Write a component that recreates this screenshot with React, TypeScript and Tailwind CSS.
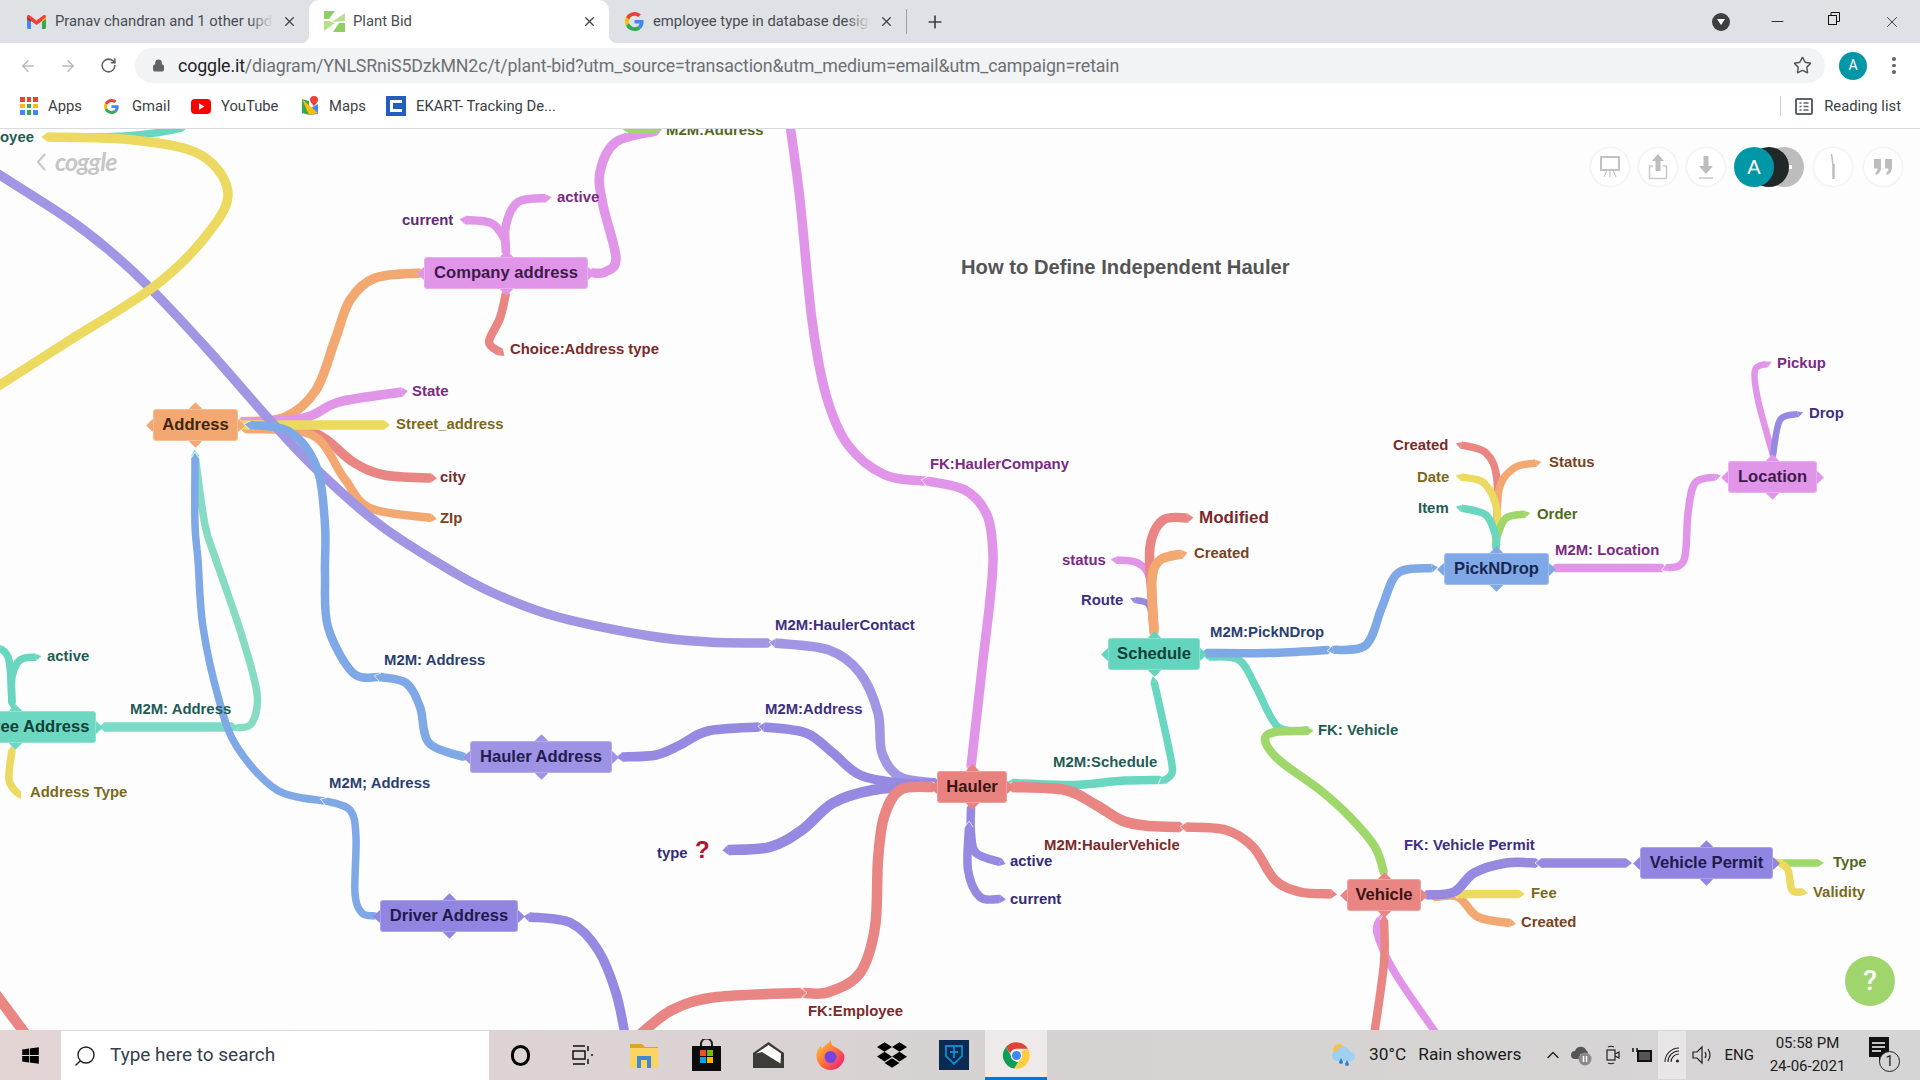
import { ArrowLeft, ArrowRight, RotateCw, Lock, Star, Plus, X, Minus, Search, ChevronUp } from "lucide-react";
import { FaDropbox, FaWindows } from "react-icons/fa";

type Pt = [number, number];
type Branch = { c: string; w: number; p: Pt[] };

const PINK = "#e095e8";
const LILAC = "#a196e3";
const PURPLE = "#9589e2";
const BLUE = "#7fa8e6";
const TEAL = "#69d6c0";
const MINT = "#85dcc2";
const ORANGE = "#f3a871";
const YELLOW = "#ecd95f";
const RED = "#e98683";
const GREEN = "#9fd76b";

// page coordinates, the svg viewBox starts at the canvas top
const branches: Branch[] = [
  { c: TEAL, w: 6, p: [[90, 137], [125, 136], [155, 133], [182, 128]] },
  { c: ORANGE, w: 8, p: [[241, 422], [285, 417], [316, 390], [335, 340], [350, 300], [375, 278], [420, 273]] },
  { c: PINK, w: 8, p: [[241, 423], [304, 418], [339, 402], [402, 392]] },
  { c: RED, w: 8, p: [[245, 428], [312, 432], [353, 462], [384, 475], [431, 478]] },
  { c: ORANGE, w: 7, p: [[245, 429], [312, 435], [344, 478], [370, 508], [431, 518]] },
  { c: YELLOW, w: 8, p: [[241, 425], [384, 425]] },
  { c: LILAC, w: 8, p: [[-5, 172], [67, 218], [110, 251], [152, 290], [210, 352], [268, 418], [312, 465], [380, 525], [455, 573], [500, 596], [558, 617], [650, 636], [708, 642], [768, 643]] },
  { c: YELLOW, w: 8, p: [[47, 137], [134, 140], [201, 155], [228, 195], [201, 242], [152, 288], [67, 342], [-5, 388]] },
  { c: BLUE, w: 7, p: [[250, 425], [290, 432], [317, 468], [325, 525], [325, 575], [328, 627], [353, 673], [380, 677]] },
  { c: BLUE, w: 7, p: [[380, 677], [406, 683], [420, 707], [429, 743], [464, 757]] },
  { c: MINT, w: 6, p: [[195, 455], [205, 525], [216, 560], [241, 633], [257, 693], [252, 723], [237, 728]] },
  { c: "#79dcc6", w: 8, p: [[104, 727], [232, 727]] },
  { c: BLUE, w: 6, p: [[195, 458], [195, 525], [198, 560], [203, 627], [219, 700], [237, 747], [277, 790], [324, 801]] },
  { c: BLUE, w: 6, p: [[326, 801], [350, 810], [356, 837], [355, 893], [362, 913], [375, 916]] },
  { c: TEAL, w: 6, p: [[0, 648], [9, 660], [12, 703]] },
  { c: TEAL, w: 6, p: [[36, 657], [20, 660], [12, 677], [12, 703]] },
  { c: YELLOW, w: 6, p: [[12, 750], [9, 780], [18, 794]] },
  { c: PINK, w: 7, p: [[546, 198], [518, 202], [506, 225], [506, 252]] },
  { c: PINK, w: 7, p: [[465, 220], [491, 223], [504, 238], [506, 252]] },
  { c: PINK, w: 8, p: [[592, 273], [605, 272], [616, 258], [603, 205], [600, 172], [616, 142], [656, 131]] },
  { c: GREEN, w: 7, p: [[628, 129], [656, 129]] },
  { c: RED, w: 7, p: [[506, 293], [500, 318], [489, 342], [500, 352]] },
  { c: PINK, w: 8, p: [[790, 125], [800, 200], [812, 320], [826, 395], [848, 445], [885, 475], [925, 481]] },
  { c: PINK, w: 8, p: [[927, 481], [965, 490], [987, 515], [993, 555], [990, 600], [983, 660], [971, 767]] },
  { c: LILAC, w: 8, p: [[775, 643], [829, 650], [860, 673], [878, 713], [882, 753], [900, 777], [935, 783]] },
  { c: PURPLE, w: 8, p: [[622, 757], [656, 755], [680, 745], [708, 731], [759, 727]] },
  { c: PURPLE, w: 8, p: [[764, 727], [806, 733], [833, 753], [860, 775], [900, 783], [935, 783]] },
  { c: PURPLE, w: 9, p: [[728, 850], [770, 847], [802, 830], [833, 803], [873, 790], [935, 784]] },
  { c: RED, w: 9, p: [[933, 787], [900, 790], [884, 817], [878, 860], [875, 927], [860, 973], [829, 992], [804, 993]] },
  { c: RED, w: 9, p: [[801, 993], [717, 997], [672, 1010], [636, 1038]] },
  { c: PURPLE, w: 8, p: [[529, 917], [571, 923], [598, 950], [616, 993], [626, 1040]] },
  { c: RED, w: 9, p: [[-5, 993], [27, 1036]] },
  { c: TEAL, w: 7, p: [[1012, 783], [1074, 785], [1119, 781], [1160, 780]] },
  { c: TEAL, w: 6, p: [[1163, 781], [1171, 775], [1172, 765], [1166, 735], [1156, 690], [1154, 682]] },
  { c: RED, w: 9, p: [[1012, 787], [1065, 790], [1096, 805], [1123, 821], [1150, 826], [1180, 827]] },
  { c: RED, w: 8, p: [[1186, 827], [1226, 830], [1253, 847], [1275, 880], [1300, 892], [1331, 894]] },
  { c: PURPLE, w: 7, p: [[971, 807], [971, 833], [976, 853], [1000, 862]] },
  { c: PURPLE, w: 7, p: [[969, 827], [968, 870], [980, 897], [1000, 899]] },
  { c: PURPLE, w: 5, p: [[1135, 600], [1149, 605], [1153, 630]] },
  { c: PINK, w: 6, p: [[1116, 560], [1138, 563], [1150, 580], [1153, 630]] },
  { c: RED, w: 8, p: [[1188, 518], [1163, 520], [1150, 547], [1152, 597], [1154, 630]] },
  { c: ORANGE, w: 8, p: [[1182, 554], [1160, 560], [1152, 580], [1154, 633]] },
  { c: TEAL, w: 6, p: [[1209, 657], [1239, 660], [1256, 687], [1278, 727], [1308, 730]] },
  { c: BLUE, w: 7, p: [[1206, 653], [1267, 653], [1328, 650]] },
  { c: BLUE, w: 7, p: [[1333, 650], [1366, 645], [1382, 607], [1398, 573], [1432, 568]] },
  { c: GREEN, w: 7, p: [[1308, 731], [1275, 732], [1265, 740], [1279, 760], [1320, 790], [1350, 817], [1375, 847], [1384, 873]] },
  { c: RED, w: 6, p: [[1461, 445], [1486, 453], [1497, 480], [1496, 545]] },
  { c: ORANGE, w: 6, p: [[1536, 463], [1514, 468], [1499, 490], [1496, 545]] },
  { c: YELLOW, w: 6, p: [[1461, 477], [1484, 483], [1497, 510], [1496, 545]] },
  { c: GREEN, w: 6, p: [[1525, 514], [1506, 518], [1497, 537], [1496, 548]] },
  { c: TEAL, w: 6, p: [[1461, 508], [1486, 515], [1496, 537], [1496, 548]] },
  { c: PINK, w: 7, p: [[1555, 568], [1662, 568]] },
  { c: PINK, w: 6, p: [[1667, 568], [1684, 560], [1688, 513], [1695, 483], [1715, 477]] },
  { c: PINK, w: 5, p: [[1767, 364], [1755, 370], [1758, 400], [1773, 455]] },
  { c: PURPLE, w: 5, p: [[1798, 414], [1780, 420], [1773, 455]] },
  { c: ORANGE, w: 7, p: [[1434, 897], [1458, 897], [1478, 917], [1510, 923]] },
  { c: YELLOW, w: 7, p: [[1458, 894], [1519, 894]] },
  { c: PURPLE, w: 8, p: [[1426, 895], [1454, 892], [1474, 873], [1506, 863], [1536, 863]] },
  { c: PURPLE, w: 8, p: [[1541, 863], [1626, 863]] },
  { c: PINK, w: 6, p: [[1381, 918], [1377, 933], [1395, 973], [1438, 1036]] },
  { c: RED, w: 7, p: [[1384, 920], [1384, 963], [1374, 1036]] },
  { c: GREEN, w: 6, p: [[1780, 863], [1818, 863]] },
  { c: YELLOW, w: 6, p: [[1779, 862], [1788, 870], [1792, 890], [1802, 892]] },
];

const nodes = [
  { label: "Company address", x: 424, y: 257, w: 164, bg: "bg-[#e095e8]", fg: "text-[#3d1a4a]" },
  { label: "Address", x: 153, y: 409, w: 85, bg: "bg-[#f3a871]", fg: "text-[#40260f]" },
  { label: "Hauler Address", x: 470, y: 741, w: 142, bg: "bg-[#9d92e3]", fg: "text-[#241c50]" },
  { label: "Driver Address", x: 380, y: 900, w: 138, bg: "bg-[#9086e2]", fg: "text-[#201a4c]" },
  { label: "Employee Address", x: -66, y: 711, w: 162, bg: "bg-[#6cd8c2]", fg: "text-[#123f38]" },
  { label: "Hauler", x: 937, y: 771, w: 70, bg: "bg-[#e8827e]", fg: "text-[#3a1414]" },
  { label: "Schedule", x: 1108, y: 638, w: 92, bg: "bg-[#63d4bd]", fg: "text-[#123f38]" },
  { label: "PickNDrop", x: 1444, y: 553, w: 105, bg: "bg-[#7fa8e6]", fg: "text-[#1a2650]" },
  { label: "Location", x: 1728, y: 461, w: 89, bg: "bg-[#e095e8]", fg: "text-[#3d1a4a]" },
  { label: "Vehicle", x: 1347, y: 879, w: 74, bg: "bg-[#e98683]", fg: "text-[#3a1414]" },
  { label: "Vehicle Permit", x: 1640, y: 847, w: 133, bg: "bg-[#9086e2]", fg: "text-[#201a4c]" },
];

const labels = [
  { t: "oyee", x: 0, y: 137, c: "text-[#1f5c55]" },
  { t: "current", x: 402, y: 220, c: "text-[#5f2a78]" },
  { t: "active", x: 557, y: 197, c: "text-[#7a2a82]" },
  { t: "Choice:Address type", x: 510, y: 349, c: "text-[#7a2a2a]" },
  { t: "State", x: 412, y: 391, c: "text-[#7a2a82]" },
  { t: "Street_address", x: 396, y: 424, c: "text-[#7a6a1a]" },
  { t: "city", x: 440, y: 477, c: "text-[#7a2a2a]" },
  { t: "ZIp", x: 440, y: 518, c: "text-[#7a431d]" },
  { t: "M2M:Address", x: 666, y: 130, c: "text-[#4f6a20]" },
  { t: "FK:HaulerCompany", x: 930, y: 464, c: "text-[#7a2a82]" },
  { t: "M2M:HaulerContact", x: 775, y: 625, c: "text-[#3f2f80]" },
  { t: "M2M:Address", x: 765, y: 709, c: "text-[#3f2f80]" },
  { t: "M2M: Address", x: 384, y: 660, c: "text-[#2a3f70]" },
  { t: "active", x: 47, y: 656, c: "text-[#1f5c55]" },
  { t: "M2M: Address", x: 130, y: 709, c: "text-[#1f5c55]" },
  { t: "Address Type", x: 30, y: 792, c: "text-[#7a6a1a]" },
  { t: "M2M; Address", x: 329, y: 783, c: "text-[#2a3f70]" },
  { t: "type", x: 657, y: 853, c: "text-[#352a78]" },
  { t: "M2M:Schedule", x: 1053, y: 762, c: "text-[#1f5c55]" },
  { t: "M2M:PickNDrop", x: 1210, y: 632, c: "text-[#2a3f70]" },
  { t: "Route", x: 1081, y: 600, c: "text-[#3f2f80]" },
  { t: "status", x: 1062, y: 560, c: "text-[#7a2a82]" },
  { t: "Created", x: 1194, y: 553, c: "text-[#7a431d]" },
  { t: "Created", x: 1393, y: 445, c: "text-[#7a2a2a]" },
  { t: "Date", x: 1417, y: 477, c: "text-[#7a6a1a]" },
  { t: "Item", x: 1418, y: 508, c: "text-[#1f5c55]" },
  { t: "Status", x: 1549, y: 462, c: "text-[#7a431d]" },
  { t: "Order", x: 1537, y: 514, c: "text-[#4f6a20]" },
  { t: "M2M: Location", x: 1555, y: 550, c: "text-[#7a2a82]" },
  { t: "Pickup", x: 1777, y: 363, c: "text-[#7a2a82]" },
  { t: "Drop", x: 1809, y: 413, c: "text-[#3f2f80]" },
  { t: "FK: Vehicle", x: 1318, y: 730, c: "text-[#1f5c55]" },
  { t: "FK: Vehicle Permit", x: 1404, y: 845, c: "text-[#3f2f80]" },
  { t: "Fee", x: 1531, y: 893, c: "text-[#7a6a1a]" },
  { t: "Created", x: 1521, y: 922, c: "text-[#7a431d]" },
  { t: "Type", x: 1833, y: 862, c: "text-[#4f6a20]" },
  { t: "Validity", x: 1813, y: 892, c: "text-[#7a6a1a]" },
  { t: "M2M:HaulerVehicle", x: 1044, y: 845, c: "text-[#7a2a2a]" },
  { t: "active", x: 1010, y: 861, c: "text-[#352a78]" },
  { t: "current", x: 1010, y: 899, c: "text-[#352a78]" },
  { t: "FK:Employee", x: 808, y: 1011, c: "text-[#7a2a2a]" },
];

function smooth(p: Pt[]) {
  let d = `M${p[0][0]} ${p[0][1]}`;
  for (let i = 0; i < p.length - 1; i++) {
    const a = p[i - 1] || p[i];
    const b = p[i];
    const c = p[i + 1];
    const e = p[i + 2] || c;
    d += `C${b[0] + (c[0] - a[0]) / 6} ${b[1] + (c[1] - a[1]) / 6} ${c[0] - (e[0] - b[0]) / 6} ${c[1] - (e[1] - b[1]) / 6} ${c[0]} ${c[1]}`;
  }
  return d;
}

// small arrow head on a line end, pointing from -> to
function tipShape(from: Pt, to: Pt, w: number) {
  const [x, y] = to;
  const len = Math.hypot(x - from[0], y - from[1]) || 1;
  const ux = (x - from[0]) / len;
  const uy = (y - from[1]) / len;
  const h = w / 2;
  return `${x - uy * h},${y + ux * h} ${x + ux * 6},${y + uy * 6} ${x + uy * h},${y - ux * h}`;
}

function MindMapLines() {
  return (
    <svg className="absolute inset-0" width={1920} height={901} viewBox="0 129 1920 901" fill="none">
      {branches.map((b, i) => {
        const w = b.w + 1.5;
        const head = tipShape(b.p[1], b.p[0], w);
        return (
          <g key={i}>
            <path d={smooth(b.p)} stroke={b.c} strokeWidth={w} />
            <polygon points={tipShape(b.p[b.p.length - 2], b.p[b.p.length - 1], w)} fill={b.c} />
            <polygon points={head} fill={b.c} />
            <polyline points={head} stroke="#fff" strokeWidth={0.9} strokeOpacity={0.8} />
          </g>
        );
      })}
    </svg>
  );
}

function MapNode({ label, x, y, w, bg, fg }: (typeof nodes)[number]) {
  return (
    <div className="absolute h-[32px]" style={{ left: x, top: y - 129, width: w }}>
      <span className={`absolute left-1/2 -top-[5px] -ml-[4.5px] w-[9px] h-[9px] rotate-45 ${bg}`} />
      <span className={`absolute left-1/2 -bottom-[5px] -ml-[4.5px] w-[9px] h-[9px] rotate-45 ${bg}`} />
      <span className={`absolute top-1/2 -left-[5px] -mt-[4.5px] w-[9px] h-[9px] rotate-45 ${bg}`} />
      <span className={`absolute top-1/2 -right-[5px] -mt-[4.5px] w-[9px] h-[9px] rotate-45 ${bg}`} />
      <div className={`relative h-full rounded-[3px] border border-white/25 flex items-center justify-center whitespace-nowrap text-[16.6px] font-bold ${bg} ${fg}`}>
        {label}
      </div>
    </div>
  );
}

function GoogleG({ size }: { size: number }) {
  return (
    <svg width={size} height={size} viewBox="0 0 48 48">
      <path fill="#EA4335" d="M24 9.5c3.54 0 6.71 1.22 9.21 3.6l6.85-6.85C35.9 2.38 30.47 0 24 0 14.62 0 6.51 5.38 2.56 13.22l7.98 6.19C12.43 13.72 17.74 9.5 24 9.5z" />
      <path fill="#4285F4" d="M46.98 24.55c0-1.57-.15-3.09-.38-4.55H24v9.02h12.94c-.58 2.96-2.26 5.48-4.78 7.18l7.73 6c4.51-4.18 7.09-10.36 7.09-17.65z" />
      <path fill="#FBBC05" d="M10.53 28.59c-.48-1.45-.76-2.99-.76-4.59s.27-3.14.76-4.59l-7.98-6.19C.92 16.46 0 20.12 0 24c0 3.88.92 7.54 2.56 10.78l7.97-6.19z" />
      <path fill="#34A853" d="M24 48c6.48 0 11.93-2.13 15.89-5.81l-7.73-6c-2.15 1.45-4.92 2.3-8.16 2.3-6.26 0-11.57-4.22-13.47-9.91l-7.98 6.19C6.51 42.62 14.62 48 24 48z" />
    </svg>
  );
}

function GmailIcon() {
  return (
    <svg width={19} height={14} viewBox="0 0 19 14">
      <path fill="#4285F4" d="M0 2v10.5A1.5 1.5 0 0 0 1.5 14H4V5z" />
      <path fill="#34A853" d="M15 5v9h2.5a1.5 1.5 0 0 0 1.5-1.5V2z" />
      <path fill="#EA4335" d="M0 1.5 C0 .2 1.6-.5 2.6.3L9.5 5.6 16.4.3C17.4-.5 19 .2 19 1.5V3L15 6 9.5 10 4 6 0 3z" />
      <path fill="#C5221F" d="M0 2l4 3v2L0 4z" />
      <path fill="#FBBC04" d="M19 2l-4 3v2l4-3z" />
    </svg>
  );
}

function CoggleFavicon() {
  return (
    <svg width={23} height={21} viewBox="0 0 23 21">
      <path fill="#8fd05f" d="M1 0h11L6 8H1z" />
      <path fill="#b6e08f" d="M9 11l13-9v8z" />
      <path fill="#8fd05f" d="M22 21H10l6-9h6z" />
      <path fill="#b6e08f" d="M1 10h5l6 2-11 8z" />
    </svg>
  );
}

function ChromeLogo({ size }: { size: number }) {
  return (
    <svg width={size} height={size} viewBox="0 0 48 48">
      <path fill="#db4437" d="M24 2a22 22 0 0 1 19 11H24a11 11 0 0 0-10.5 7.5L6.5 10A22 22 0 0 1 24 2z" />
      <path fill="#0f9d58" d="M6.5 10l9.600 16.500A11 11 0 0 0 27 34.600L20.500 45.700A22 22 0 0 1 6.500 10z" />
      <path fill="#ffcd40" d="M43 13a22 22 0 0 1-22.500 32.700L31 27.500A11 11 0 0 0 32 17.500z" />
      <circle cx="24" cy="24" r="9.500" fill="#fff" />
      <circle cx="24" cy="24" r="7.500" fill="#4285f4" />
    </svg>
  );
}

function Tab({ icon, title, textWidth, active, close }: { icon: React.ReactNode; title: string; textWidth: number; active?: boolean; close: number }) {
  return (
    <div className={`relative h-[43px] flex items-center shrink-0 ${active ? "bg-white rounded-t-[10px] w-[300px] pl-[14px]" : "pl-[14px]"}`}>
      {active && <span className="absolute bottom-0 -left-[8px] w-[8px] h-[8px] bg-[radial-gradient(circle_at_0_0,transparent_8px,white_8.5px)]" />}
      {active && <span className="absolute bottom-0 -right-[8px] w-[8px] h-[8px] bg-[radial-gradient(circle_at_100%_0,transparent_8px,white_8.5px)]" />}
      <div className="w-[23px] flex justify-center shrink-0">{icon}</div>
      <div className="relative ml-[7px] overflow-hidden whitespace-nowrap text-[14.8px] text-[#4a4c50]" style={{ width: textWidth }}>
        {title}
        {!active && <span className="absolute right-0 top-0 bottom-0 w-[24px] bg-gradient-to-r from-transparent to-[#dee1e6]" />}
      </div>
      <X size={15} strokeWidth={2.2} className="text-[#44474a]" style={{ marginLeft: close }} />
    </div>
  );
}

function TabBar() {
  return (
    <div className="h-[43px] bg-[#dee1e6] flex items-center shrink-0">
      <div className="w-[309px] shrink-0 pl-[11px]">
        <Tab icon={<GmailIcon />} title="Pranav chandran and 1 other updates" textWidth={218} close={9} />
      </div>
      <Tab active icon={<CoggleFavicon />} title="Plant Bid" textWidth={225} close={4} />
      <div className="w-[297px] shrink-0">
        <Tab icon={<GoogleG size={19} />} title="employee type in database design" textWidth={217} close={9} />
      </div>
      <div className="w-px h-[25px] bg-[#9da0a5]" />
      <Plus size={20} strokeWidth={2} className="ml-[18px] text-[#3c4043]" />
      <div className="ml-auto mr-[190px] w-[18px] h-[18px] rounded-full bg-[#3c4043] flex items-center justify-center">
        <span className="w-0 h-0 border-x-[4px] border-x-transparent border-t-[6px] border-t-white" />
      </div>
      <Minus size={19} strokeWidth={1} className="absolute left-[1768px] text-black" />
      <svg className="absolute left-[1827px] top-[12px]" width={14} height={13} viewBox="0 0 14 13" fill="none" stroke="#111">
        <rect x="1.500" y="3.500" width="8" height="9" />
        <path d="M4 3.500V.500h8.500v9H9.500" />
      </svg>
      <X size={18} strokeWidth={1} className="absolute left-[1883px] text-[#111]" />
    </div>
  );
}

function Toolbar() {
  return (
    <div className="h-[40px] bg-white flex items-end shrink-0 pl-[19px]">
      <div className="h-[35px] flex items-center">
        <ArrowLeft size={18} strokeWidth={2} className="text-[#b6b9bd]" />
        <ArrowRight size={18} strokeWidth={2} className="ml-[22px] text-[#b6b9bd]" />
        <RotateCw size={17} strokeWidth={2.2} className="ml-[23px] text-[#5f6368]" />
      </div>
      <div className="ml-[18px] w-[1690px] h-[35px] rounded-full bg-[#f1f3f4] flex items-center pl-[17px] pr-[13px]">
        <Lock size={13} fill="#5f6368" className="text-[#5f6368]" />
        <div className="ml-[13px] pt-[1px] text-[17.8px] tracking-[-0.13px] text-[#6e7074] whitespace-nowrap">
          <span className="text-[#202124]">coggle.it</span>/diagram/YNLSRniS5DzkMN2c/t/plant-bid?utm_source=transaction&amp;utm_medium=email&amp;utm_campaign=retain
        </div>
        <Star size={19} strokeWidth={1.8} className="ml-auto text-[#4f5256]" />
      </div>
      <div className="h-[35px] flex items-center">
        <div className="ml-[14px] w-[28px] h-[28px] rounded-full bg-[#0097a7] text-white text-[14px] flex items-center justify-center">A</div>
        <div className="ml-[25px] flex flex-col gap-[3px]">
          <span className="w-[3.5px] h-[3.5px] rounded-full bg-[#5f6368]" />
          <span className="w-[3.5px] h-[3.5px] rounded-full bg-[#5f6368]" />
          <span className="w-[3.5px] h-[3.5px] rounded-full bg-[#5f6368]" />
        </div>
      </div>
    </div>
  );
}

function BookmarkBar() {
  return (
    <div className="h-[46px] pt-[1px] bg-white border-b border-[#d8dbe0] flex items-center shrink-0 text-[14.8px] text-[#3c4043] whitespace-nowrap pl-[20px]">
      <div className="grid grid-cols-3 gap-[2px] w-[18px]">
        {["#ea4335", "#ea4335", "#ea4335", "#fbbc04", "#34a853", "#fbbc04", "#4285f4", "#34a853", "#4285f4"].map((c, i) => (
          <span key={i} className="h-[4.5px] w-[4.5px]" style={{ background: c }} />
        ))}
      </div>
      <span className="ml-[10px] w-[56px]">Apps</span>
      <GoogleG size={15} />
      <span className="ml-[13px] w-[38px]">Gmail</span>
      <svg className="ml-[21px]" width={20} height={15} viewBox="0 0 20 15">
        <rect width="20" height="15" rx="4" fill="#f00" />
        <path d="M8 4.200v6.600l5.500-3.300z" fill="#fff" />
      </svg>
      <span className="ml-[10px] w-[58px]">YouTube</span>
      <svg className="ml-[22px]" width={18} height={20} viewBox="0 0 18 20">
        <path fill="#34a853" d="M1 3l7 2v14l-7-2z" />
        <path fill="#4285f4" d="M8 13l9-5v10l-9 1z" />
        <path fill="#fbbc04" d="M1 3l16 14-9 2z" />
        <path fill="#ea4335" d="M13 0a4 4 0 0 1 4 4c0 2.500-4 6-4 6S9 6.500 9 4a4 4 0 0 1 4-4z" />
      </svg>
      <span className="ml-[10px] w-[36px]">Maps</span>
      <div className="ml-[21px] w-[20px] h-[20px] bg-[#1f5fbf] flex items-center justify-center">
        <div className="w-[12px] h-[12px] border-[3px] border-white border-r-0 bg-[#1f5fbf]" />
      </div>
      <span className="ml-[10px]">EKART- Tracking De...</span>
      <div className="ml-auto w-px h-[20px] bg-[#c8ccd0]" />
      <svg className="ml-[14px]" width={18} height={17} viewBox="0 0 18 17" fill="none" stroke="#5f6368" strokeWidth="2">
        <rect x="1" y="1" width="16" height="15" rx="1" />
        <path d="M4.500 5h2M8.500 5h5M4.500 8.500h2M8.500 8.500h5M4.500 12h2M8.500 12h5" strokeWidth="1.500" />
      </svg>
      <span className="ml-[11px] mr-[19px]">Reading list</span>
    </div>
  );
}

function RoundButton({ children }: { children: React.ReactNode }) {
  return (
    <div className="w-[38px] h-[38px] rounded-full bg-white shadow-[0_0_3px_rgba(0,0,0,0.12)] flex items-center justify-center">
      {children}
    </div>
  );
}

function CanvasButtons() {
  return (
    <div className="absolute right-[18px] top-[18px] flex items-center">
      <RoundButton>
        <svg width={22} height={24} viewBox="0 0 22 24" fill="none" stroke="#bdbdbd" strokeWidth="1.800">
          <rect x="2" y="2" width="18" height="13" fill="#fff" />
          <path d="M11 15v7M8 15l-3 7M14 15l3 7" strokeWidth="1" />
        </svg>
      </RoundButton>
      <div className="ml-[10px]">
        <RoundButton>
          <svg width={20} height={26} viewBox="0 0 20 26">
            <path fill="none" stroke="#c9c9c9" strokeWidth="1.500" d="M5 12H1.500v12.500h17V12H15" />
            <path fill="#bdbdbd" d="M10 0l6 7h-3.500v10h-5V7H4z" />
          </svg>
        </RoundButton>
      </div>
      <div className="ml-[10px]">
        <RoundButton>
          <svg width={16} height={24} viewBox="0 0 16 24">
            <path fill="#bdbdbd" d="M5.500 1h5v10H15l-7 8-7-8h4.500z" />
            <path stroke="#c9c9c9" strokeWidth="1.500" d="M1 23h14" />
          </svg>
        </RoundButton>
      </div>
      <div className="relative ml-[9px] w-[70px] h-[40px]">
        <div className="absolute left-[30px] top-0 w-[40px] h-[40px] rounded-full bg-[#bdbdbd] flex items-center justify-center">
          <span className="ml-[6px] w-[10px] h-[4px] bg-white" />
        </div>
        <div className="absolute left-[15px] top-0 w-[40px] h-[40px] rounded-full bg-[#22282a]" />
        <div className="absolute left-0 top-0 w-[40px] h-[40px] rounded-full bg-[#0097a7] text-white text-[20px] flex items-center justify-center">A</div>
      </div>
      <div className="ml-[10px]">
        <RoundButton>
          <svg width={6} height={28} viewBox="0 0 6 28" fill="none" stroke="#bdbdbd" strokeWidth="1.500">
            <path d="M1.500 1l1.500 11" />
            <path d="M3.500 11v15" strokeWidth="2.500" />
          </svg>
        </RoundButton>
      </div>
      <div className="ml-[12px]">
        <RoundButton>
          <svg width={20} height={18} viewBox="0 0 20 18" fill="#bdbdbd">
            <path d="M1 1h7v8c0 4-2 7-5 8l-1-2c1.500-1 2.500-2.500 2.500-4.500H1z" />
            <path d="M12 1h7v8c0 4-2 7-5 8l-1-2c1.500-1 2.500-2.500 2.500-4.500H12z" />
          </svg>
        </RoundButton>
      </div>
    </div>
  );
}

function MapCanvas() {
  return (
    <div className="relative flex-1 overflow-hidden bg-[#fdfdfd] font-['Liberation_Sans',sans-serif]">
      <MindMapLines />
      {labels.map((l, i) => (
        <div
          key={i}
          className={`absolute -translate-y-1/2 whitespace-nowrap text-[14.9px] font-bold leading-none ${l.c}`}
          style={{ left: l.x, top: l.y - 129 }}
        >
          {l.t}
        </div>
      ))}
      <div className="absolute left-[1199px] top-[388px] -translate-y-1/2 whitespace-nowrap text-[17px] font-bold leading-none text-[#7a2a2a]">Modified</div>
      <div className="absolute left-[695px] top-[721px] -translate-y-1/2 text-[24px] font-bold leading-none text-[#b5102f]">?</div>
      {nodes.map((n) => (
        <MapNode key={n.label} {...n} />
      ))}
      <div className="absolute left-[961px] top-[138px] -translate-y-1/2 whitespace-nowrap text-[20.2px] font-bold leading-none text-[#555555]">
        How to Define Independent Hauler
      </div>
      <div className="absolute left-[35px] top-[20px] flex items-center text-[#c6c6c6]">
        <svg width={12} height={20} viewBox="0 0 12 20" fill="none" stroke="currentColor" strokeWidth="2">
          <path d="M10 2L3 10l7 8" />
        </svg>
        <span className="ml-[8px] font-['Lato',sans-serif] text-[25px] italic font-bold leading-none tracking-[-1px]">coggle</span>
      </div>
      <CanvasButtons />
      <div className="absolute left-[1845px] top-[827px] w-[50px] h-[50px] rounded-full bg-[#a0d56e] flex items-center justify-center text-white text-[28px] font-['Roboto',sans-serif] font-medium">?</div>
    </div>
  );
}

function TaskCell({ children, active }: { children: React.ReactNode; active?: boolean }) {
  return (
    <div className={`w-[62px] h-[50px] flex items-center justify-center shrink-0 relative ${active ? "bg-[#efeaea]" : ""}`}>
      {children}
      {active && <span className="absolute left-0 right-0 bottom-0 h-[3px] bg-[#0078d7]" />}
    </div>
  );
}

function Taskbar() {
  return (
    <div className="h-[50px] shrink-0 flex items-center bg-gradient-to-r from-[#e4d5d5] via-[#d7d2d2] to-[#d6d5d5] text-[#1c1c1c] whitespace-nowrap">
      <div className="w-[61px] flex justify-center shrink-0">
        <FaWindows size={19} className="text-black" />
      </div>
      <div className="w-[428px] h-[49px] self-end bg-white flex items-center pl-[12px] shrink-0">
        <Search size={24} strokeWidth={1.4} className="-scale-x-100 text-[#222]" />
        <span className="ml-[13px] text-[19px] text-[#33404d]">Type here to search</span>
      </div>
      <TaskCell>
        <span className="w-[19px] h-[21px] rounded-full border-[3px] border-black" />
      </TaskCell>
      <TaskCell>
        <svg width={22} height={20} viewBox="0 0 22 20" fill="none" stroke="#111" strokeWidth="1.500">
          <path d="M2 1h12M2 19h12M17 1v5M17 14v5M21 9v2" />
          <rect x="2" y="6" width="12" height="8" />
        </svg>
      </TaskCell>
      <TaskCell>
        <svg width={28} height={26} viewBox="0 0 28 26">
          <path fill="#e0a32a" d="M0 2h12l3 3h13v8H0z" />
          <path fill="#fcd462" d="M0 6h28v20H0z" />
          <path fill="#3d8bd4" d="M7 26V14h14v12h-4v-8h-6v8z" />
        </svg>
      </TaskCell>
      <TaskCell>
        <svg width={29} height={32} viewBox="0 0 29 32">
          <path fill="none" stroke="#222" strokeWidth="2" d="M9 8V5a5.500 5.500 0 0 1 11 0v3" />
          <rect y="7" width="29" height="25" fill="#0c0c0c" />
          <rect x="8" y="11" width="6" height="6" fill="#f25022" />
          <rect x="15" y="11" width="6" height="6" fill="#7fba00" />
          <rect x="8" y="18" width="6" height="6" fill="#00a4ef" />
          <rect x="15" y="18" width="6" height="6" fill="#ffb900" />
        </svg>
      </TaskCell>
      <TaskCell>
        <svg width={31} height={26} viewBox="0 0 31 26">
          <path fill="#3f3b39" d="M0 11L15.500 0 31 11v15H0z" />
          <path fill="#fff" d="M3 11.500L15.500 3 28 11.500l-.5 10L9 10z" />
          <path fill="#3f3b39" d="M3 12l24 12H3z" />
        </svg>
      </TaskCell>
      <TaskCell>
        <svg width={29} height={30} viewBox="0 0 29 30">
          <defs>
            <linearGradient id="fx" x1="0" y1="0" x2="1" y2="1">
              <stop offset="0" stopColor="#ffcf38" />
              <stop offset="0.5" stopColor="#ff7139" />
              <stop offset="1" stopColor="#e31587" />
            </linearGradient>
          </defs>
          <path fill="url(#fx)" d="M14.500 30A14 14 0 0 1 .5 16C.5 11 3 7 5 6l1 3c2-4 5-4 9-9 0 3 0 5 4 7 6 3 9.500 6 9.500 10A14 14 0 0 1 14.500 30z" />
          <circle cx="14.500" cy="17" r="6" fill="#7542e5" />
        </svg>
      </TaskCell>
      <TaskCell>
        <FaDropbox size={30} className="text-black" />
      </TaskCell>
      <TaskCell>
        <div className="w-[30px] h-[30px] bg-[#0a2a50] flex items-center justify-center">
          <svg width={18} height={22} viewBox="0 0 18 22" fill="none" stroke="#0d8bd0" strokeWidth="1.800">
            <path d="M1 2h16v10l-8 8-8-8zM9 2v12M5 8h8" />
          </svg>
        </div>
      </TaskCell>
      <TaskCell active>
        <ChromeLogo size={29} />
      </TaskCell>
      <div className="ml-auto flex items-center pr-[21px] h-full">
        <svg width={26} height={24} viewBox="0 0 26 24">
          <circle cx="8" cy="7" r="6" fill="#f4c24a" />
          <path fill="#9fd0f2" d="M6 18a5 5 0 0 1 0-10 7 7 0 0 1 13 1 4.500 4.500 0 0 1 1 9z" />
          <path fill="#2f80d0" d="M10 15l2 4a2 2 0 0 1-4 0zM16 17l2 4a2 2 0 0 1-4 0z" />
        </svg>
        <span className="ml-[12px] text-[17.3px]">30°C</span>
        <span className="ml-[12px] text-[17.3px]">Rain showers</span>
        <ChevronUp size={20} strokeWidth={1.5} className="ml-[21px]" />
        <svg className="ml-[8px]" width={21} height={21} viewBox="0 0 21 21">
          <path fill="#555" d="M4 14a4 4 0 0 1 0-8 6 6 0 0 1 11-1 4 4 0 0 1 2 4H9v5z" />
          <circle cx="14" cy="14" r="6.500" fill="#8a8a8a" />
          <path stroke="#fff" strokeWidth="1.500" d="M12.500 11v6M15.500 11v6" />
        </svg>
        <svg className="ml-[14px]" width={14} height={20} viewBox="0 0 14 20" fill="none" stroke="#222" strokeWidth="1.200">
          <rect x="1" y="5" width="8" height="10" />
          <path d="M9 9l4-2v6l-4-2M2 2q3-1.500 6 0M2 18q3 1.500 6 0" />
        </svg>
        <svg className="ml-[12px]" width={20} height={16} viewBox="0 0 20 16">
          <path stroke="#111" strokeWidth="1.500" d="M1 1v4M5 1v4" />
          <rect x="5" y="3" width="15" height="12" fill="#111" />
          <rect x="7" y="5" width="11" height="8" fill="#555" />
        </svg>
        <div className="ml-[6px] w-[28px] h-[48px] bg-[#e8e6e6] flex items-center justify-center">
          <svg width={16} height={16} viewBox="0 0 16 16" fill="none" stroke="#222" strokeWidth="1.100">
            <path d="M1 15A14 14 0 0 1 15 1M4 15A11 11 0 0 1 15 4M7 15A8 8 0 0 1 15 7" />
            <circle cx="13.500" cy="14" r="1.500" fill="#222" stroke="none" />
          </svg>
        </div>
        <svg className="ml-[6px]" width={21} height={22} viewBox="0 0 21 22" fill="none" stroke="#222" strokeWidth="1.200">
          <path d="M1 8h4l5-5v16l-5-5H1zM13 8q2 3 0 6M16 5q4 6 0 12" />
        </svg>
        <span className="ml-[12px] text-[15px]">ENG</span>
        <div className="ml-[16px] w-[75px] flex flex-col items-center text-[15px] leading-[23px]">
          <span>05:58 PM</span>
          <span>24-06-2021</span>
        </div>
        <div className="relative ml-[24px] w-[30px] h-[36px]">
          <svg className="absolute left-0 top-0" width={20} height={25} viewBox="0 0 20 25">
            <path fill="#111" d="M0 0h20v20l-5 0-5 5v-5H0z" />
            <path stroke="#fff" strokeWidth="1.300" d="M3 6h13M3 10h13M3 14h9" />
          </svg>
          <div className="absolute left-[10px] top-[14px] w-[21px] h-[21px] rounded-full border border-[#222] bg-[#d6d5d5] text-[14px] flex items-center justify-center">1</div>
        </div>
      </div>
    </div>
  );
}

export default function App() {
  return (
    <div className="relative w-[1920px] h-[1080px] overflow-hidden flex flex-col font-['Roboto',sans-serif]">
      <TabBar />
      <Toolbar />
      <BookmarkBar />
      <MapCanvas />
      <Taskbar />
    </div>
  );
}
